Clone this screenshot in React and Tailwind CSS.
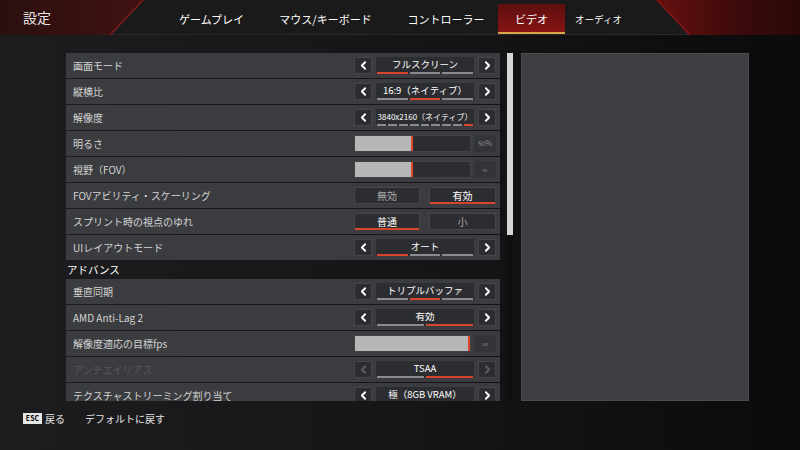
import React from 'react';
import { ChevronLeft, ChevronRight } from 'lucide-react';

const FONT = { fontFamily: '"Noto Sans CJK JP", "Noto Sans", sans-serif' };

const Row = ({ label, dim, children }) => (
  <div className="h-[25px] mb-px shrink-0 bg-[#3b3c3f] flex items-center justify-between pl-[7px] pr-[4px]">
    <span className={`text-[10px] ${dim ? 'text-[#56575a]' : 'text-[#d4d4d4]'}`}>{label}</span>
    {children}
  </div>
);

const ArrowBox = ({ dir, dim }) => (
  <div className="w-[18px] h-[17px] bg-[#2c2d30] border border-[#45464a] flex items-center justify-center">
    {dir === 'left' ? (
      <ChevronLeft size={13} strokeWidth={3.5} className={dim ? 'text-[#5c5d60]' : 'text-white'} />
    ) : (
      <ChevronRight size={13} strokeWidth={3.5} className={dim ? 'text-[#5c5d60]' : 'text-white'} />
    )}
  </div>
);

const Selector = ({ value, count, active, small, dim }) => (
  <div className="flex items-center gap-[4px]">
    <ArrowBox dir="left" dim={dim} />
    <div className="relative w-[98px] h-[17px] bg-[#2c2d30] flex items-center justify-center">
      <span className={`${small ? 'text-[8px]' : 'text-[9.5px]'} text-white leading-none -mt-[2px]`}>{value}</span>
      <div className="absolute left-[1px] right-[1px] bottom-0 flex gap-[2px]">
        {Array.from({ length: count }).map((_, i) => (
          <div key={i} className={`flex-1 h-[2px] ${i === active ? 'bg-[#d8452e]' : 'bg-[#8a8b8e]'}`} />
        ))}
      </div>
    </div>
    <ArrowBox dir="right" dim={dim} />
  </div>
);

const Slider = ({ fill, value, valueSize }) => (
  <div className="flex items-center gap-[3px] h-[17px]">
    <div className="w-[117px] h-[17px] bg-[#2c2d30] border border-[#414245] flex">
      <div className="h-full bg-[#b7b7b8] border-r-2 border-[#e0452c]" style={{ width: fill }} />
    </div>
    <div className="w-[22px] h-[17px] bg-[#333437] flex items-center justify-center">
      <span className={`${valueSize} text-[#8d8e91] leading-none`}>{value}</span>
    </div>
  </div>
);

const Toggle = ({ left, right, active }) => (
  <div className="flex items-center gap-[9px]">
    {[left, right].map((t, i) => (
      <div
        key={t}
        className={`relative ${i === 0 ? 'w-[66px]' : 'w-[67px]'} h-[17px] bg-[#2c2d30] border border-[#45464a] flex items-center justify-center`}
      >
        <span className={`text-[10px] leading-none ${i === active ? 'text-white' : 'text-[#a9aaad]'}`}>{t}</span>
        {i === active && <div className="absolute left-0 right-0 -bottom-px h-[2px] bg-[#d8452e]" />}
      </div>
    ))}
  </div>
);

const Tab = ({ label, w, active, small }) => (
  <div
    className={`relative h-[30px] flex items-center justify-center ${w} ${
      active ? 'bg-gradient-to-b from-[#5e0e0e] to-[#8a1515]' : ''
    }`}
  >
    <span className={`${small ? 'text-[9.5px]' : 'text-[11px]'} text-white`}>{label}</span>
    {active && <div className="absolute left-0 right-0 bottom-0 h-[2px] bg-[#d9a546]" />}
  </div>
);

export default function App() {
  return (
    <div
      style={FONT}
      className="w-[800px] h-[450px] overflow-hidden flex flex-col bg-gradient-to-r from-[#1d1d1f] via-[#161618] to-[#0b0b0c]"
    >
      {/* header */}
      <div className="relative h-[35px] shrink-0 bg-[#1a1a1b] border-b border-[#2a2a2c]">
        <svg className="absolute inset-0" width="800" height="35" viewBox="0 0 800 35">
          <defs>
            <linearGradient id="hl" x1="0" x2="1" y1="0" y2="0">
              <stop offset="0" stopColor="#2a0f0f" />
              <stop offset="1" stopColor="#421212" />
            </linearGradient>
            <linearGradient id="hr" x1="0" x2="1" y1="0" y2="0">
              <stop offset="0" stopColor="#660f0f" />
              <stop offset="0.6" stopColor="#3a0a0a" />
              <stop offset="1" stopColor="#2a0909" />
            </linearGradient>
          </defs>
          <polygon points="0,0 143,0 110,35 0,35" fill="url(#hl)" />
          <line x1="143" y1="0" x2="110" y2="35" stroke="#7e1b1b" strokeWidth="1.5" />
          <polygon points="657,0 800,0 800,35 690,35" fill="url(#hr)" />
          <line x1="657" y1="0" x2="690" y2="35" stroke="#8a1515" strokeWidth="1.5" />
        </svg>
        <div className="relative h-full flex items-end">
          <div className="h-full flex items-center pl-[23px] w-[170px]">
            <span className="text-[14px] text-[#e6e6e6]">設定</span>
          </div>
          <Tab label="ゲームプレイ" w="w-[83px]" />
          <Tab label="マウス/キーボード" w="w-[145px]" />
          <Tab label="コントローラー" w="w-[96px]" />
          <div className="w-[4px]" />
          <Tab label="ビデオ" w="w-[67px]" active />
          <Tab label="オーディオ" w="w-[67px]" small />
        </div>
      </div>

      {/* main */}
      <div className="flex pt-[18px] pl-[66px] h-[366px] shrink-0">
        <div className="w-[434px] h-[348px] overflow-hidden flex flex-col">
          <Row label="画面モード">
            <Selector value="フルスクリーン" count={3} active={0} />
          </Row>
          <Row label="縦横比">
            <Selector value="16:9（ネイティブ）" count={3} active={1} />
          </Row>
          <Row label="解像度">
            <Selector value="3840x2160（ネイティブ）" count={9} active={8} small />
          </Row>
          <Row label="明るさ">
            <Slider fill="50%" value="50%" valueSize="text-[7px]" />
          </Row>
          <Row label="視野（FOV）">
            <Slider fill="50%" value="90" valueSize="text-[4px]" />
          </Row>
          <Row label="FOVアビリティ・スケーリング">
            <Toggle left="無効" right="有効" active={1} />
          </Row>
          <Row label="スプリント時の視点のゆれ">
            <Toggle left="普通" right="小" active={0} />
          </Row>
          <Row label="UIレイアウトモード">
            <Selector value="オート" count={3} active={0} />
          </Row>
          <div className="h-[18px] shrink-0 flex items-center pl-[1px]">
            <span className="text-[10.5px] text-white">アドバンス</span>
          </div>
          <Row label="垂直同期">
            <Selector value="トリプルバッファ" count={3} active={1} />
          </Row>
          <Row label="AMD Anti-Lag 2">
            <Selector value="有効" count={2} active={1} />
          </Row>
          <Row label="解像度適応の目標fps">
            <Slider fill="100%" value="100" valueSize="text-[4px]" />
          </Row>
          <Row label="アンチエイリアス" dim>
            <Selector value="TSAA" count={2} active={1} dim />
          </Row>
          <Row label="テクスチャストリーミング割り当て">
            <Selector value="極（8GB VRAM）" count={3} active={2} />
          </Row>
        </div>

        {/* scrollbar */}
        <div className="ml-[7px] w-[6px] h-[348px] bg-[#0f0f10]">
          <div className="h-[182px] bg-[#d6d6d6]" />
        </div>

        {/* preview panel */}
        <div className="ml-[8px] w-[228px] h-[348px] bg-[#3e3f42] border border-[#4b4c4f]" />
      </div>

      {/* footer */}
      <div className="flex items-center pl-[23px] pt-[10px] gap-[3px]">
        <span className="w-[19px] h-[11px] bg-[#e6e6e6] text-black text-[7px] font-bold flex items-center justify-center leading-none">
          ESC
        </span>
        <span className="text-[10px] text-[#e6e6e6]">戻る</span>
        <span className="ml-[17px] text-[10px] text-[#e6e6e6]">デフォルトに戻す</span>
      </div>
    </div>
  );
}
